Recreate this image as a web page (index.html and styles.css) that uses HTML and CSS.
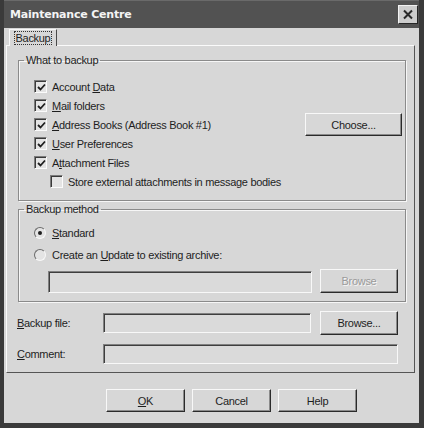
FILE: index.html
```html
<!DOCTYPE html>
<html>
<head>
<meta charset="utf-8">
<link rel="stylesheet" href="styles.css">
</head>
<body>
<div class="window">
  <div class="titlebar">
    <span class="title">Maintenance Centre</span>
    <span class="close"><svg width="12" height="11" viewBox="0 0 12 11"><path d="M2 1.5 L10 9.5 M10 1.5 L2 9.5" stroke="#2a2a2a" stroke-width="2" fill="none"/></svg></span>
  </div>
  <div class="tabs">
    <div class="tab"><span class="focus">Backup</span></div>
  </div>
  <div class="panel">
    <fieldset class="group g1">
      <legend>What to backup</legend>
      <div class="row"><span class="cb"><svg width="9" height="9" viewBox="0 0 9 9"><path d="M1 4 L3.5 6.5 L8 1.5" stroke="#1e1e1e" stroke-width="1.8" fill="none"/></svg></span><span>Account <u>D</u>ata</span></div>
      <div class="row"><span class="cb"><svg width="9" height="9" viewBox="0 0 9 9"><path d="M1 4 L3.5 6.5 L8 1.5" stroke="#1e1e1e" stroke-width="1.8" fill="none"/></svg></span><span><u>M</u>ail folders</span></div>
      <div class="row"><span class="cb"><svg width="9" height="9" viewBox="0 0 9 9"><path d="M1 4 L3.5 6.5 L8 1.5" stroke="#1e1e1e" stroke-width="1.8" fill="none"/></svg></span><span><u>A</u>ddress Books (Address Book #1)</span><button class="btn choose">Choose...</button></div>
      <div class="row"><span class="cb"><svg width="9" height="9" viewBox="0 0 9 9"><path d="M1 4 L3.5 6.5 L8 1.5" stroke="#1e1e1e" stroke-width="1.8" fill="none"/></svg></span><span><u>U</u>ser Preferences</span></div>
      <div class="row"><span class="cb"><svg width="9" height="9" viewBox="0 0 9 9"><path d="M1 4 L3.5 6.5 L8 1.5" stroke="#1e1e1e" stroke-width="1.8" fill="none"/></svg></span><span>A<u>t</u>tachment Files</span></div>
      <div class="row indent"><span class="cb"></span><span>Store external attachments in message bodies</span></div>
    </fieldset>
    <fieldset class="group g2">
      <legend>Backup method</legend>
      <div class="row r2"><span class="radio"><span class="dot"></span></span><span><u>S</u>tandard</span></div>
      <div class="row r2"><span class="radio"></span><span>Create an <u>U</u>pdate to existing archive:</span></div>
      <div class="archive-row">
        <span class="edit archive"></span>
        <button class="btn browse disabled">Browse</button>
      </div>
    </fieldset>
    <div class="field-row first">
      <span class="label"><u>B</u>ackup file:</span>
      <span class="edit file"></span>
      <button class="btn browse">Browse...</button>
    </div>
    <div class="field-row">
      <span class="label"><u>C</u>omment:</span>
      <span class="edit comment"></span>
    </div>
  </div>
  <div class="buttons">
    <button class="btn action"><u>O</u>K</button>
    <button class="btn action">Cancel</button>
    <button class="btn action">Help</button>
  </div>
</div>
</body>
</html>
```

FILE: styles.css
```css
body {
  margin: 0;
  background: #d7d7d7;
  font-family: "Liberation Sans", Arial, sans-serif;
  font-size: 11px;
  letter-spacing: -0.3px;
  color: #1e1e1e;
}

.window {
  width: 424px;
  height: 428px;
  box-sizing: border-box;
  border-left: 4px solid #3a3a3a;
  border-right: 5px solid #3a3a3a;
  border-bottom: 5px solid #3a3a3a;
  background: #d7d7d7;
  display: flex;
  flex-direction: column;
}

.titlebar {
  flex: none;
  height: 28px;
  background: #525252;
  border-top: 1px solid #6a6a6a;
  box-sizing: border-box;
  display: flex;
  align-items: center;
  justify-content: space-between;
  padding: 0 1px 0 6px;
}

.title {
  color: #f4f4f4;
  font-family: "DejaVu Sans", sans-serif;
  font-weight: bold;
  font-size: 11px;
  letter-spacing: -0.2px;
}

.close {
  width: 20px;
  height: 19px;
  box-sizing: border-box;
  background: #cdcdcd;
  border: 1px solid;
  border-color: #f2f2f2 #262626 #262626 #f2f2f2;
  display: flex;
  align-items: center;
  justify-content: center;
}

.tabs {
  flex: none;
  height: 17px;
  box-sizing: border-box;
  padding: 1px 0 0 5px;
  display: flex;
}

.tab {
  width: 48px;
  height: 17px;
  box-sizing: border-box;
  border: 1px solid;
  border-color: #fafafa #4a4a4a transparent #fafafa;
  border-bottom: none;
  background: #d7d7d7;
  display: flex;
  align-items: center;
  justify-content: center;
  position: relative;
  z-index: 1;
}

.focus {
  outline: 1px dotted #333;
  padding: 0 1px;
  line-height: 12px;
}

.panel {
  flex: none;
  height: 328px;
  margin: 0 4px 0 2px;
  box-sizing: border-box;
  border: 1px solid;
  border-color: #fafafa #555 #555 #fafafa;
  padding: 0 8px 0 11px;
  display: flex;
  flex-direction: column;
}

.group {
  margin: 0;
  border: 1px solid #8a8a8a;
  box-shadow: 1px 1px 0 #f6f6f6, inset 1px 1px 0 #f6f6f6;
  min-width: 0;
}

.group legend {
  padding: 0 2px;
  margin-left: -10px;
  line-height: 13px;
}

.g1 {
  margin-top: 8px;
  padding: 10px 3px 9px 15px;
}

.g2 {
  margin-top: 2px;
  padding: 6px 8px 8px 15px;
}

.row {
  height: 19px;
  display: flex;
  align-items: center;
  gap: 5px;
}

.row.r2 {
  height: 22px;
  gap: 6px;
}

.indent {
  padding-left: 16px;
}

.cb {
  width: 13px;
  height: 13px;
  box-sizing: border-box;
  border: 1px solid;
  border-color: #7c7c7c #fbfbfb #fbfbfb #7c7c7c;
  box-shadow: inset 1px 1px 0 #3a3a3a;
  background: #e4e4e4;
  display: flex;
  align-items: center;
  justify-content: center;
  padding: 1px 0 0 1px;
  flex: none;
}

.radio {
  width: 12px;
  height: 12px;
  box-sizing: border-box;
  border-radius: 50%;
  border: 1px solid;
  border-color: #6a6a6a #f8f8f8 #f8f8f8 #6a6a6a;
  background: #e4e4e4;
  display: flex;
  align-items: center;
  justify-content: center;
  flex: none;
}

.dot {
  width: 4px;
  height: 4px;
  border-radius: 50%;
  background: #1e1e1e;
}

.btn {
  font-family: "Liberation Sans", Arial, sans-serif;
  font-size: 11px;
  letter-spacing: -0.3px;
  color: #1e1e1e;
  background: #d7d7d7;
  box-sizing: border-box;
  border: 1px solid;
  border-color: #f8f8f8 #2a2a2a #2a2a2a #f8f8f8;
  box-shadow: inset -1px -1px 0 #8a8a8a;
  padding: 0;
  display: flex;
  align-items: center;
  justify-content: center;
  flex: none;
}

.choose {
  margin-left: auto;
  width: 97px;
  height: 23px;
  margin-top: -3px;
  margin-bottom: -3px;
}

.edit {
  display: block;
  box-sizing: border-box;
  border: 1px solid;
  border-color: #808080 #f8f8f8 #f8f8f8 #808080;
  box-shadow: inset 1px 1px 0 #3e3e3e;
  background: #dadada;
  flex: none;
}

.archive-row {
  display: flex;
  align-items: flex-end;
  gap: 8px;
  padding-left: 14px;
  margin-top: 3px;
}

.archive {
  width: 264px;
  height: 22px;
}

.browse {
  width: 78px;
  height: 24px;
}

.disabled {
  color: #9a9a9a;
  text-shadow: 1px 1px 0 #f6f6f6;
}

.field-row {
  display: flex;
  align-items: center;
  height: 23px;
  margin: 8px 0 0 -1px;
}

.field-row.first {
  margin-top: 9px;
}

.label {
  width: 86px;
  flex: none;
}

.file {
  width: 208px;
  height: 20px;
  margin-right: 9px;
}

.comment {
  width: 295px;
  height: 20px;
}

.buttons {
  flex: none;
  display: flex;
  gap: 7px;
  padding: 16px 0 0 102px;
}

.action {
  width: 79px;
  height: 23px;
}
```
